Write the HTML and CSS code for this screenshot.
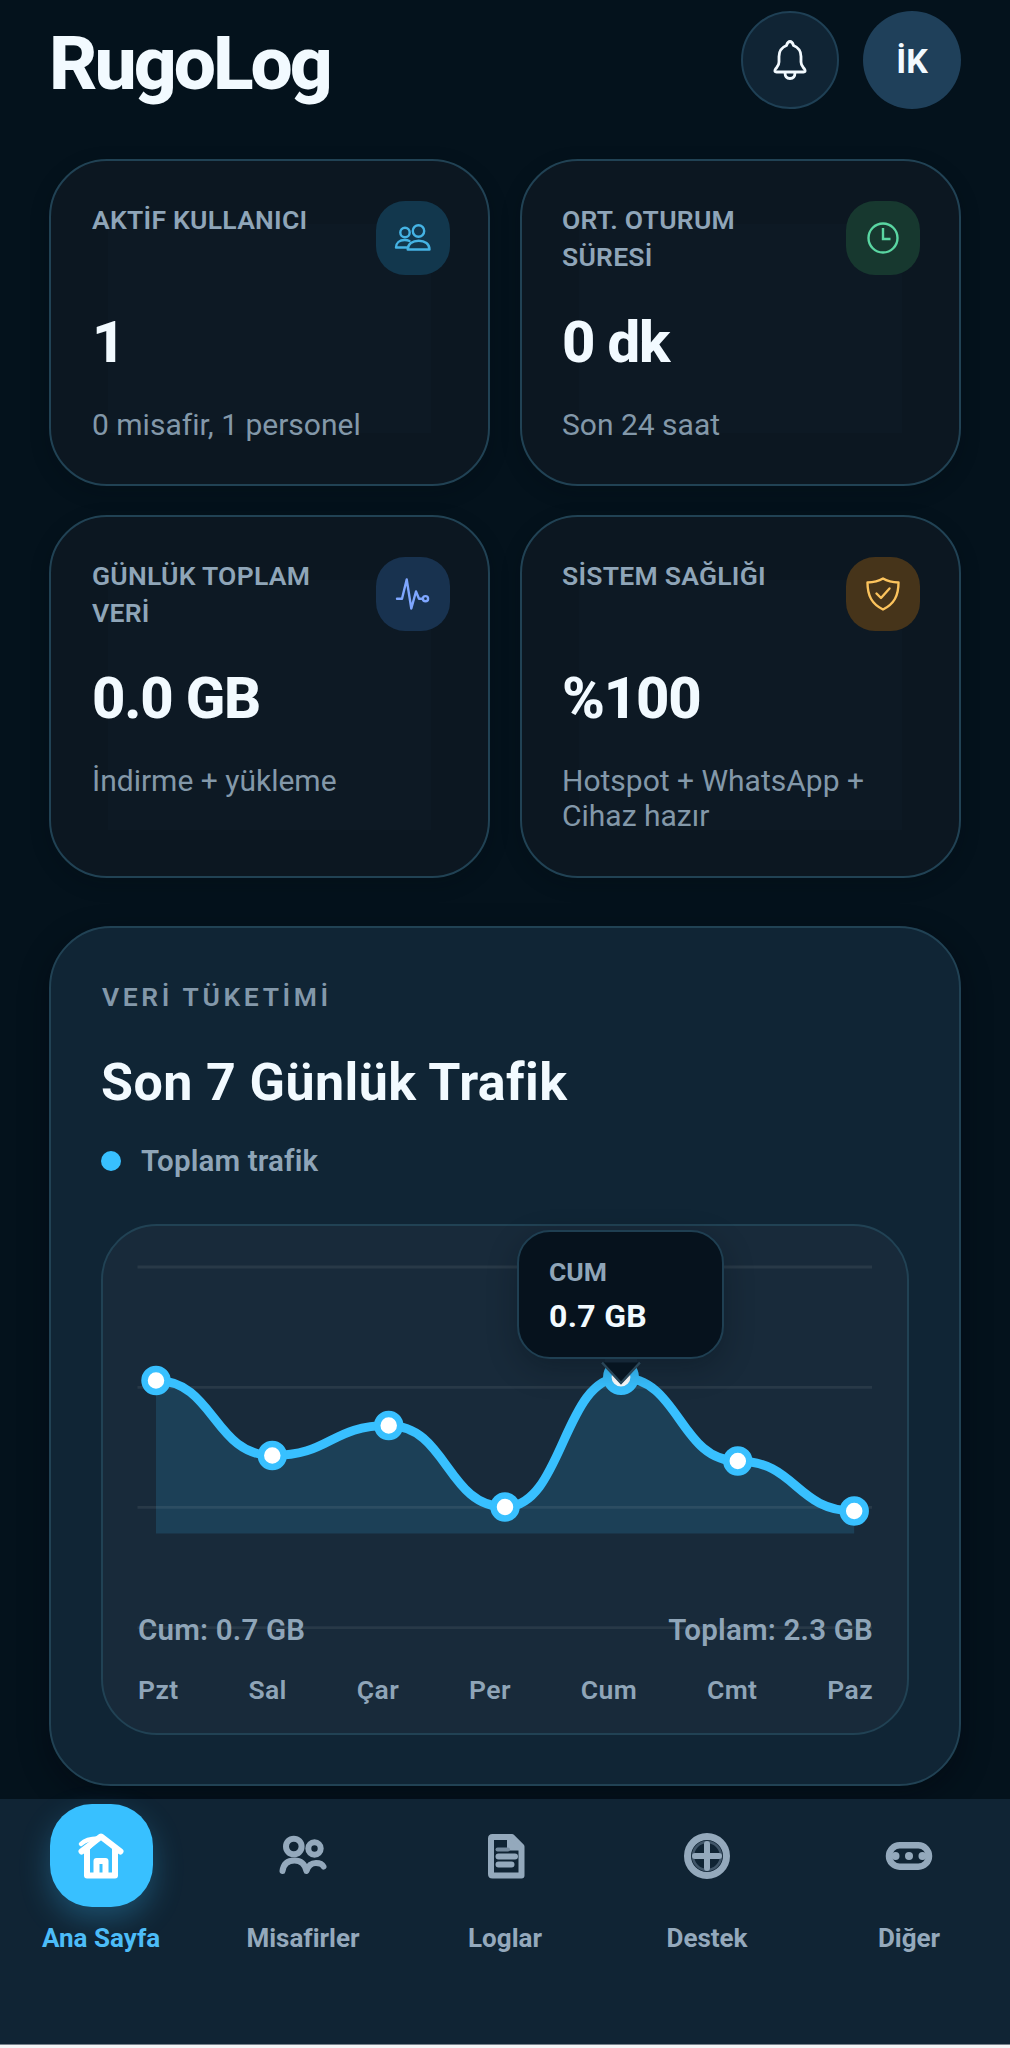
FILE: index.html
```
<!DOCTYPE html>
<html lang="tr">
<head>
  <meta charset="UTF-8">
  <meta name="viewport" content="width=device-width, initial-scale=1.0">
  <title>RugoLog</title>
  <link rel="stylesheet" href="styles.css">
</head>
<body>
  <div class="app">
    <header class="header">
      <h1 class="logo">RugoLog</h1>
      <div class="header-actions">
        <button class="bell-btn" aria-label="Bildirimler">
          <svg width="48" height="48" viewBox="0 0 48 48" fill="none" stroke="#f2faff" stroke-width="2.8" stroke-linejoin="round" stroke-linecap="round">
            <path d="M24 5.500C21.500 5.500 21 8 20.500 9.500C15.500 11.500 13 15.500 13 20.500V26C13 30 11 31 9.500 33C8 35.200 9 36 10.500 36H37.500C39 36 40 35.200 38.500 33C37 31 35 30 35 26V20.500C35 15.500 32.500 11.500 27.500 9.500C27 8 26.500 5.500 24 5.500Z"/>
            <path d="M19 36.500C19 40.500 21 42.500 24 42.500C27 42.500 29 40.500 29 36.500"/>
          </svg>
        </button>
        <div class="avatar">İK</div>
      </div>
    </header>

    <section class="stats">
      <article class="stat-card">
        <div class="stat-top">
          <h2 class="stat-label">AKTİF KULLANICI</h2>
          <div class="stat-icon icon-cyan">
            <svg width="40" height="40" viewBox="0 0 40 40" fill="none" stroke="#45b3e4" stroke-width="2.400" stroke-linejoin="round" stroke-linecap="round">
              <circle cx="25.500" cy="13" r="5.700"/>
              <circle cx="12" cy="14.500" r="4.700"/>
              <path d="M14.700 31.500C14.700 26 19.500 22.700 25.700 22.700C32 22.700 36.500 26 36.500 31.500Z"/>
              <path d="M13.500 29.500H3C3 25 6.500 22 11.500 22C13.500 22 15 22.200 16.500 23"/>
            </svg>
          </div>
        </div>
        <div class="stat-value">1</div>
        <p class="stat-sub">0 misafir, 1 personel</p>
      </article>

      <article class="stat-card">
        <div class="stat-top">
          <h2 class="stat-label">ORT. OTURUM SÜRESİ</h2>
          <div class="stat-icon icon-green">
            <svg width="40" height="40" viewBox="0 0 40 40" fill="none" stroke="#5ad6a2" stroke-width="2.400">
              <circle cx="20" cy="20" r="14.500"/>
              <path d="M20 10V21H27.500"/>
            </svg>
          </div>
        </div>
        <div class="stat-value">0 dk</div>
        <p class="stat-sub">Son 24 saat</p>
      </article>

      <article class="stat-card tall">
        <div class="stat-top">
          <h2 class="stat-label">GÜNLÜK TOPLAM VERİ</h2>
          <div class="stat-icon icon-blue">
            <svg width="40" height="40" viewBox="0 0 40 40" fill="none" stroke="#7ea6ff" stroke-width="2.400" stroke-linejoin="round" stroke-linecap="round">
              <path d="M4 24.700H9L13.700 5.500L18.300 34.500L23 17.500L26 24.700H29.500"/>
              <circle cx="32.500" cy="24.700" r="2.600"/>
            </svg>
          </div>
        </div>
        <div class="stat-value">0.0 GB</div>
        <p class="stat-sub">İndirme + yükleme</p>
      </article>

      <article class="stat-card tall">
        <div class="stat-top">
          <h2 class="stat-label">SİSTEM SAĞLIĞI</h2>
          <div class="stat-icon icon-amber">
            <svg width="40" height="40" viewBox="0 0 40 40" fill="none" stroke="#fbc35d" stroke-width="2.400" stroke-linejoin="round" stroke-linecap="round">
              <path d="M20 4.500C15.500 7.200 10.500 8.300 4.500 8.500C4.500 22 9 30 20 35.500C31 30 35.500 22 35.500 8.500C29.500 8.300 24.500 7.200 20 4.500Z"/>
              <path d="M13.500 19.500L18 24L26.500 14.500"/>
            </svg>
          </div>
        </div>
        <div class="stat-value">%100</div>
        <p class="stat-sub">Hotspot + WhatsApp + Cihaz hazır</p>
      </article>
    </section>

    <section class="traffic-card">
      <p class="eyebrow">VERİ TÜKETİMİ</p>
      <h2 class="traffic-title">Son 7 Günlük Trafik</h2>
      <div class="legend"><span class="legend-dot"></span>Toplam trafik</div>

      <div class="chart">
        <svg class="chart-svg" width="804" height="400" viewBox="103 1226 804 400">
          <path d="M156 1380.500C214 1380.500 214 1455.500 272.300 1455.500C330.500 1455.500 330.500 1425.500 388.700 1425.500C447 1425.500 447 1507 505 1507C563 1507 563 1377.500 621 1377.500C679.500 1377.500 679.500 1461 737.800 1461C796 1461 796 1511 854.200 1511V1533.500H156Z" fill="#38c0ff" fill-opacity="0.150"/>
          <path class="grid-line" d="M137.500 1267H872M137.500 1387.300H872M137.500 1507.300H872M137.500 1627.700H872"/>
          <path d="M156 1380.500C214 1380.500 214 1455.500 272.300 1455.500C330.500 1455.500 330.500 1425.500 388.700 1425.500C447 1425.500 447 1507 505 1507C563 1507 563 1377.500 621 1377.500C679.500 1377.500 679.500 1461 737.800 1461C796 1461 796 1511 854.200 1511" fill="none" stroke="#38c0ff" stroke-width="9" stroke-linecap="round"/>
          <g class="points">
            <circle cx="156" cy="1380.500" r="11.500"/>
            <circle cx="272.300" cy="1455.500" r="11.500"/>
            <circle cx="388.700" cy="1425.500" r="11.500"/>
            <circle cx="505" cy="1507" r="11.500"/>
            <circle class="selected" cx="621" cy="1377" r="13.700"/>
            <circle cx="737.800" cy="1461" r="11.500"/>
            <circle cx="854.200" cy="1511" r="11.500"/>
          </g>
        </svg>
        <div class="tooltip">
          <span class="tooltip-day">CUM</span>
          <span class="tooltip-value">0.7 GB</span>
          <svg class="tooltip-arrow" width="40" height="27" viewBox="0 0 40 27">
            <path d="M4 0H36V4H4Z" fill="#152737"/>
            <path d="M0 3.500H40L20 25Z" fill="#071521"/>
            <path d="M1 3.500L20 24L39 3.500" fill="none" stroke="#2a4658" stroke-width="2.500"/>
          </svg>
        </div>
        <div class="chart-summary">
          <span>Cum: 0.7 GB</span>
          <span>Toplam: 2.3 GB</span>
        </div>
        <div class="chart-days">
          <span>Pzt</span>
          <span>Sal</span>
          <span>Çar</span>
          <span>Per</span>
          <span>Cum</span>
          <span>Cmt</span>
          <span>Paz</span>
        </div>
      </div>
    </section>

    <nav class="bottom-nav">
      <a class="nav-item active">
        <span class="nav-icon">
          <svg width="52" height="52" viewBox="0 0 52 52" fill="none" stroke="#fff" stroke-width="6" stroke-linejoin="round" stroke-linecap="round">
            <path d="M6.500 21.500L26 6.500L45.500 21.500"/>
            <path d="M12 19V45.500H40V19"/>
            <path d="M21.500 44V31H30.500V44"/>
            <path d="M6 14C10 10 15 8.500 23 8.500L12 19" stroke-width="4.500"/>
          </svg>
        </span>
        <span class="nav-label">Ana Sayfa</span>
      </a>
      <a class="nav-item">
        <span class="nav-icon">
          <svg width="52" height="52" viewBox="0 0 52 52" fill="none" stroke="#94a9bc" stroke-width="6" stroke-linejoin="round" stroke-linecap="round">
            <circle cx="16.800" cy="16.500" r="7.800"/>
            <circle cx="37.500" cy="18.500" r="6.200"/>
            <path d="M5.500 41C6.500 34 11 30.500 17.500 30.500C24 30.500 28 34.500 29.500 41C31 36 34 33 39 33C43 33 45.500 34.500 46.500 36.500"/>
          </svg>
        </span>
        <span class="nav-label">Misafirler</span>
      </a>
      <a class="nav-item">
        <span class="nav-icon">
          <svg width="52" height="52" viewBox="-1 0 52 52" fill="none" stroke="#94a9bc" stroke-width="6" stroke-linejoin="round" stroke-linecap="round">
            <path d="M12.500 7H32L41.500 16.500V45.500H12.500Q11 45.500 11 44V8.500Q11 7 12.500 7Z"/>
            <path d="M28.500 7V19H41L31 8Z" fill="#94a9bc" stroke-width="3"/>
            <path d="M18.500 26.500H35M18.500 34.500H31.500"/>
            <path d="M17.500 19.500H28" stroke-width="4" stroke="#758a9d"/>
          </svg>
        </span>
        <span class="nav-label">Loglar</span>
      </a>
      <a class="nav-item">
        <span class="nav-icon">
          <svg width="52" height="52" viewBox="0 0 52 52" fill="none" stroke="#94a9bc" stroke-width="6" stroke-linecap="round">
            <circle cx="26" cy="26" r="14" stroke="#415669" stroke-width="2.500"/>
            <circle cx="26" cy="26" r="19.500" stroke-width="7"/>
            <path d="M26 14V38M14 26H38"/>
          </svg>
        </span>
        <span class="nav-label">Destek</span>
      </a>
      <a class="nav-item">
        <span class="nav-icon">
          <svg width="52" height="52" viewBox="0 0 52 52" fill="none" stroke="#94a9bc" stroke-width="6.500">
            <rect x="6" y="15.300" width="40" height="21.400" rx="10.700"/>
            <g fill="#94a9bc" stroke="none">
              <circle cx="12.500" cy="26" r="4"/>
              <circle cx="26" cy="26" r="4"/>
              <circle cx="39.500" cy="26" r="4"/>
            </g>
          </svg>
        </span>
        <span class="nav-label">Diğer</span>
      </a>
    </nav>
  </div>
</body>
</html>
```
FILE: styles.css
```
* {
  box-sizing: border-box;
}

body {
  margin: 0;
  background-color: #f3f4f5;
  font-family: Roboto, 'Liberation Sans', sans-serif;
  color: #f2faff;
}

h1,
h2,
p {
  margin: 0;
}

.app {
  width: 1010px;
  height: 2045px;
  display: flex;
  flex-direction: column;
  background-color: #04121c;
  border-bottom: 1px solid #76828c;
  overflow: hidden;
}

/* header */
.header {
  display: flex;
  justify-content: space-between;
  align-items: flex-start;
  padding: 11px 49px 0 49px;
  height: 159px;
}

.logo {
  font-size: 75px;
  line-height: 88px;
  font-weight: 800;
  letter-spacing: -3px;
  padding-top: 8px;
}

.header-actions {
  display: flex;
  gap: 24px;
}

.bell-btn,
.avatar {
  width: 98px;
  height: 98px;
  border-radius: 50%;
  display: flex;
  align-items: center;
  justify-content: center;
  padding: 0;
}

.bell-btn {
  background-color: #102434;
  border: 2px solid #1f4055;
}

.avatar {
  background-color: #1f405a;
  font-size: 34px;
  font-weight: 700;
  padding-top: 2px;
}

/* stat cards */
.stats {
  display: grid;
  grid-template-columns: 1fr 1fr;
  gap: 29px 30px;
  padding: 0 49px;
}

.stat-card {
  height: 327px;
  padding: 40px 38px 0 41px;
  border: 2px solid #214254;
  border-radius: 58px;
  background: linear-gradient(#0d1924, #0d1924) 57px 63px / 323px 209px no-repeat #0c1721;
  box-shadow: 0 6px 20px rgba(0, 8, 14, 0.200);
}

.stat-card:nth-child(even) {
  padding: 40px 39px 0 40px;
}

.stat-card.tall {
  height: 363px;
  background-size: 323px 250px;
}

.stat-top {
  display: flex;
  justify-content: space-between;
  height: 101px;
}

.stat-label {
  width: 240px;
  font-size: 26.500px;
  line-height: 37px;
  font-weight: 600;
  letter-spacing: 0.250px;
  color: #8fa5b8;
}

.stat-icon {
  width: 74px;
  height: 74px;
  border-radius: 29px;
  display: flex;
  align-items: center;
  justify-content: center;
}

.icon-cyan {
  background-color: #12374d;
}

.icon-green {
  background-color: #17382f;
}

.icon-blue {
  background-color: #18324f;
}

.icon-amber {
  background-color: #46341a;
}

.stat-value {
  font-size: 58px;
  line-height: 80px;
  font-weight: 800;
  letter-spacing: -1.200px;
}

.stat-sub {
  margin-top: 25px;
  font-size: 30px;
  line-height: 35px;
  color: #8398a9;
}

/* traffic card */
.traffic-card {
  margin: 48px 49px 0;
  height: 860px;
  flex-shrink: 0;
  padding: 50px 50px 0;
  border: 2px solid #214254;
  border-radius: 62px;
  background-color: #102535;
  box-shadow: 0 10px 30px rgba(0, 6, 12, 0.400);
}

.eyebrow {
  padding-left: 1px;
  font-size: 26.500px;
  line-height: 38px;
  font-weight: 600;
  letter-spacing: 3.600px;
  color: #8398aa;
}

.traffic-title {
  margin-top: 33px;
  font-size: 52px;
  line-height: 68px;
  font-weight: 700;
  letter-spacing: 0.400px;
}

.legend {
  margin-top: 26px;
  display: flex;
  align-items: center;
  gap: 20px;
  font-size: 29.500px;
  line-height: 36px;
  font-weight: 600;
  letter-spacing: 0.150px;
  color: #8fa5b8;
}

.legend-dot {
  width: 20px;
  height: 20px;
  border-radius: 50%;
  background-color: #38c0ff;
}

.chart {
  position: relative;
  margin-top: 45px;
  width: 808px;
  height: 511px;
  padding-top: 387px;
  border: 2px solid #214254;
  border-radius: 56px;
  background-color: #182a3a;
}

.chart-svg {
  position: absolute;
  left: 0;
  top: 0;
  display: block;
  overflow: visible;
}

.grid-line {
  stroke: #ffffff;
  stroke-opacity: 0.070;
  stroke-width: 2.800;
}

.points circle {
  fill: #ffffff;
  stroke: #38c0ff;
  stroke-width: 6.500;
}

.points .selected {
  stroke-width: 8.500;
}

.tooltip {
  position: absolute;
  left: 414px;
  top: 4px;
  width: 207px;
  height: 129px;
  padding: 22px 30px;
  display: flex;
  flex-direction: column;
  border: 2px solid #1f3f52;
  border-radius: 33px;
  background-color: #06121d;
  box-shadow: 0 10px 30px rgba(2, 12, 20, 0.300);
}

.tooltip-day {
  font-size: 26.500px;
  line-height: 36px;
  font-weight: 700;
  color: #8fa5b8;
}

.tooltip-value {
  margin-top: 3px;
  font-size: 32px;
  line-height: 46px;
  font-weight: 700;
  letter-spacing: 0.300px;
}

.tooltip-arrow {
  position: absolute;
  left: 82px;
  bottom: -29px;
}

.chart-summary,
.chart-days {
  position: relative;
  display: flex;
  justify-content: space-between;
  margin: 0 34px 0 35px;
  font-weight: 600;
  color: #8fa5b8;
}

.chart-summary {
  font-size: 29.500px;
  line-height: 34px;
  letter-spacing: 0.200px;
}

.chart-days {
  margin-top: 26px;
  font-size: 26.500px;
  line-height: 34px;
  letter-spacing: 0.400px;
}

/* bottom navigation */
.bottom-nav {
  position: relative;
  margin-top: 13px;
  flex: 1;
  display: grid;
  grid-template-columns: repeat(5, 1fr);
  padding-top: 5px;
  background-color: #102434;
}

.nav-item {
  display: flex;
  flex-direction: column;
  align-items: center;
  gap: 15px;
  color: #94a9bc;
}

.nav-icon {
  width: 103px;
  height: 103px;
  border-radius: 42px;
  display: flex;
  align-items: center;
  justify-content: center;
}

.nav-label {
  font-size: 26px;
  line-height: 32px;
  font-weight: 700;
}

.active .nav-icon {
  background-color: #38c0ff;
  box-shadow: 0 12px 30px rgba(56, 192, 255, 0.280);
}

.active .nav-label {
  color: #4cbcf8;
}
```
